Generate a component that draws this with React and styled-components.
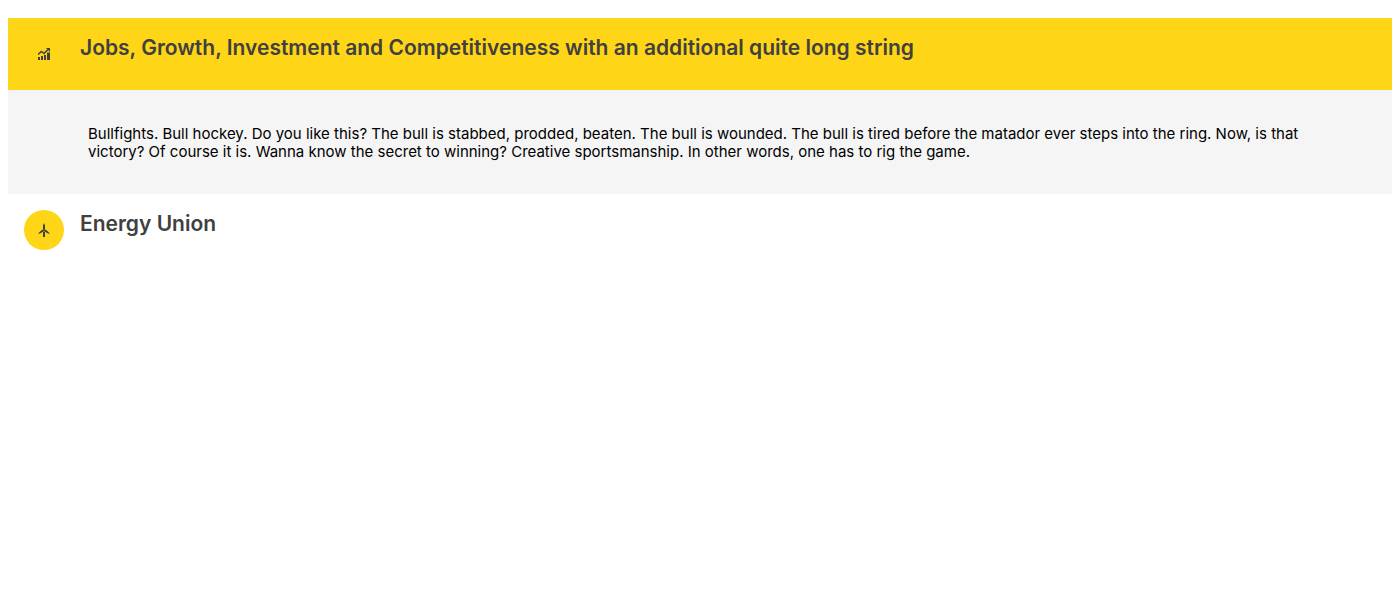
import React, { useState } from "react";
import styled, { createGlobalStyle } from "styled-components";

const GlobalStyle = createGlobalStyle`
  body {
    margin: 8px;
    background: #fff;
    color: #000;
    font-family: Inter, "Liberation Sans", sans-serif;
    font-size: 15px;
  }
`;

const Accordion = styled.main`
  padding-top: 10px;
`;

const Heading = styled.h2`
  margin: 0;
  font-size: 21px;
`;

const Toggle = styled.button`
  display: flex;
  align-items: flex-start;
  gap: 16px;
  width: 100%;
  padding: 16px;
  border: 0;
  background: ${({ $open }) => ($open ? "#ffd617" : "transparent")};
  color: #404040;
  font: inherit;
  font-weight: 600;
  line-height: 28px;
  text-align: left;
  cursor: pointer;
`;

const Badge = styled.span`
  display: flex;
  flex: none;
  align-items: center;
  justify-content: center;
  width: 40px;
  height: 40px;
  border-radius: 50%;
  background: #ffd617;
`;

const Panel = styled.div`
  padding: 35px 64px 33px 80px;
  background: #f5f5f5;
  line-height: 18px;
`;

const Text = styled.p`
  margin: 0;
`;

const ChartIcon = () => (
  <svg width="12" height="12" viewBox="0 0 24 24" fill="#404040" aria-hidden="true">
    <path d="M0 18h4v6H0zM6 16h4v8H6zM12 14h4v10h-4zM18 9h6v15h-6z" />
    <path d="M0 13l7-6 5 4 8-8" fill="none" stroke="#404040" strokeWidth="3" />
    <path d="M16 0h8v8z" />
  </svg>
);

const TurbineIcon = () => (
  <svg width="12" height="14" viewBox="0 0 24 28" fill="#404040" aria-hidden="true">
    <path d="M12 0l2 5v8h-4V5zM9 13l3 3-6 4-6 2 3-4zM15 13l-3 3 6 4 6 2-3-4zM10 18l2-1 2 1v10h-4z" />
    <circle cx="12" cy="14" r="2" />
  </svg>
);

const items = [
  {
    id: "jobs",
    title: "Jobs, Growth, Investment and Competitiveness with an additional quite long string",
    Icon: ChartIcon,
    text: "Bullfights. Bull hockey. Do you like this? The bull is stabbed, prodded, beaten. The bull is wounded. The bull is tired before the matador ever steps into the ring. Now, is that victory? Of course it is. Wanna know the secret to winning? Creative sportsmanship. In other words, one has to rig the game.",
  },
  { id: "energy", title: "Energy Union", Icon: TurbineIcon },
];

export default function App() {
  const [openId, setOpenId] = useState("jobs");
  return (
    <>
      <GlobalStyle />
      <Accordion>
        {items.map(({ id, title, Icon, text }) => {
          const open = openId === id;
          return (
            <section key={id}>
              <Heading>
                <Toggle
                  type="button"
                  $open={open}
                  aria-expanded={open}
                  onClick={() => setOpenId(open ? null : id)}
                >
                  <Badge><Icon /></Badge>
                  {title}
                </Toggle>
              </Heading>
              {open && text && <Panel><Text>{text}</Text></Panel>}
            </section>
          );
        })}
      </Accordion>
    </>
  );
}
